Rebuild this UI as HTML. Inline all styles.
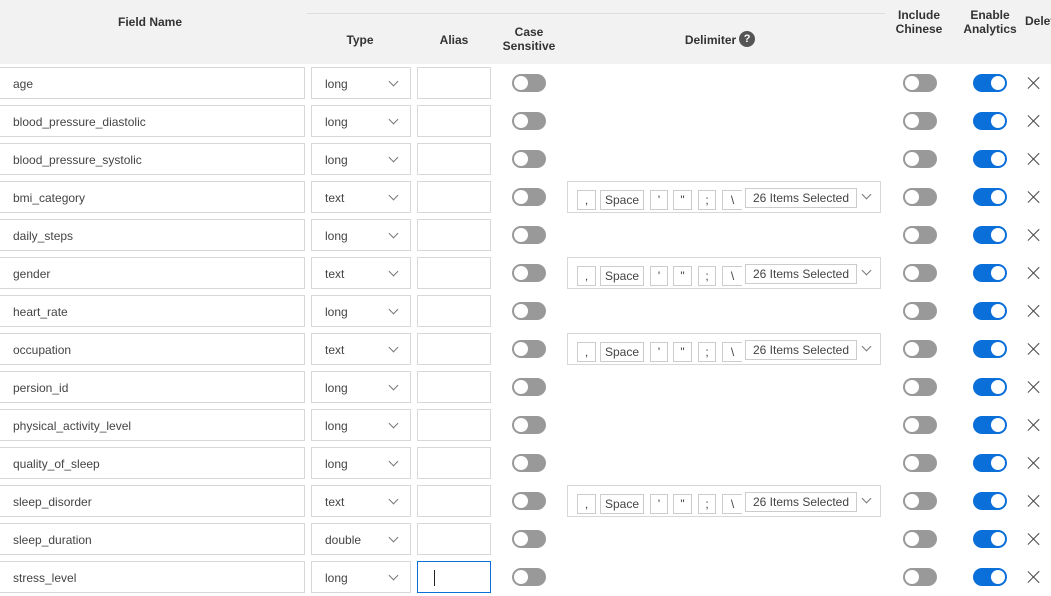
<!DOCTYPE html>
<html><head><meta charset="utf-8">
<style>
*{box-sizing:border-box;margin:0;padding:0}
body{width:1051px;height:596px;overflow:hidden;background:#fff;font-family:"Segoe UI","Liberation Sans",sans-serif;font-size:12px;color:#333;position:relative}
.hd{position:absolute;left:0;top:0;width:1051px;height:64px;background:#f2f2f2}
.hl{position:absolute;left:307px;top:13px;width:578px;height:1px;background:#ddd}
.h{position:absolute;font-weight:bold;font-size:12px;color:#333;text-align:center;line-height:14px}
.q{display:inline-block;width:16px;height:16px;border-radius:50%;background:#555;color:#fff;font-size:11px;line-height:16px;text-align:center;vertical-align:middle;margin-left:3px;margin-top:-3px}
.r{position:absolute;left:0;width:1051px;height:32px}
.in{position:absolute;top:0;height:32px;border:1px solid #d8d8d8;background:#fff;line-height:32px;color:#444;padding-left:13px}
.f{left:-1px;width:306px}
.t{left:311px;width:100px}
.t::after{content:"";position:absolute;right:13px;top:10px;width:6px;height:6px;border-right:1px solid #777;border-bottom:1px solid #777;transform:rotate(45deg)}
.a{left:417px;width:74px}
.tg{position:absolute;top:7px;width:34px;height:18px;border-radius:9px;background:#999}
.tg::after{content:"";position:absolute;left:2px;top:2px;width:14px;height:14px;border-radius:50%;background:#fff}
.on{background:#0a6fd8}.on::after{left:18px}
.x{position:absolute;left:1027px;top:9px;width:14px;height:14px}
.x::before,.x::after{content:"";position:absolute;left:6px;top:-1px;width:1.3px;height:16px;background:#444;transform:rotate(45deg)}
.x::after{transform:rotate(-45deg)}
.d{position:absolute;left:567px;top:0;width:314px;height:32px;border:1px solid #d8d8d8;background:#fff;overflow:hidden}
.d span{position:absolute;top:8px;height:20px;border:1px solid #ccc;line-height:18px;text-align:center;color:#444;font-size:12px}
.d::after{content:"";position:absolute;right:10px;top:9px;width:6px;height:6px;border-right:1px solid #777;border-bottom:1px solid #777;transform:rotate(45deg)}
</style></head><body>
<div class="hd"></div><div class="hl"></div>
<div class="h" style="left:100px;top:15px;width:100px">Field Name</div>
<div class="h" style="left:330px;top:33px;width:60px">Type</div>
<div class="h" style="left:425px;top:33px;width:58px">Alias</div>
<div class="h" style="left:494px;top:25px;width:70px">Case<br>Sensitive</div>
<div class="h" style="left:660px;top:33px;width:120px">Delimiter<span class="q">?</span></div>
<div class="h" style="left:884px;top:8px;width:70px">Include<br>Chinese</div>
<div class="h" style="left:955px;top:8px;width:70px">Enable<br>Analytics</div>
<div class="h" style="left:1025px;top:14px;width:40px;text-align:left">Delete</div>

<div class="r" style="top:67px"><div class="in f">age</div><div class="in t">long</div><div class="in a"></div><div class="tg" style="left:512px"></div><div class="tg" style="left:903px"></div><div class="tg on" style="left:973px"></div><div class="x"></div></div>
<div class="r" style="top:105px"><div class="in f">blood_pressure_diastolic</div><div class="in t">long</div><div class="in a"></div><div class="tg" style="left:512px"></div><div class="tg" style="left:903px"></div><div class="tg on" style="left:973px"></div><div class="x"></div></div>
<div class="r" style="top:143px"><div class="in f">blood_pressure_systolic</div><div class="in t">long</div><div class="in a"></div><div class="tg" style="left:512px"></div><div class="tg" style="left:903px"></div><div class="tg on" style="left:973px"></div><div class="x"></div></div>
<div class="r" style="top:181px"><div class="in f">bmi_category</div><div class="in t">text</div><div class="in a"></div><div class="tg" style="left:512px"></div><div class="d"><span style="left:9px;width:19px">,</span><span style="left:32px;width:44px">Space</span><span style="left:82px;width:18px">'</span><span style="left:105px;width:19px">"</span><span style="left:130px;width:18px">;</span><span style="left:154px;width:20px;border-right:none">\</span><span style="left:177px;width:112px;top:6px">26 Items Selected</span></div><div class="tg" style="left:903px"></div><div class="tg on" style="left:973px"></div><div class="x"></div></div>
<div class="r" style="top:219px"><div class="in f">daily_steps</div><div class="in t">long</div><div class="in a"></div><div class="tg" style="left:512px"></div><div class="tg" style="left:903px"></div><div class="tg on" style="left:973px"></div><div class="x"></div></div>
<div class="r" style="top:257px"><div class="in f">gender</div><div class="in t">text</div><div class="in a"></div><div class="tg" style="left:512px"></div><div class="d"><span style="left:9px;width:19px">,</span><span style="left:32px;width:44px">Space</span><span style="left:82px;width:18px">'</span><span style="left:105px;width:19px">"</span><span style="left:130px;width:18px">;</span><span style="left:154px;width:20px;border-right:none">\</span><span style="left:177px;width:112px;top:6px">26 Items Selected</span></div><div class="tg" style="left:903px"></div><div class="tg on" style="left:973px"></div><div class="x"></div></div>
<div class="r" style="top:295px"><div class="in f">heart_rate</div><div class="in t">long</div><div class="in a"></div><div class="tg" style="left:512px"></div><div class="tg" style="left:903px"></div><div class="tg on" style="left:973px"></div><div class="x"></div></div>
<div class="r" style="top:333px"><div class="in f">occupation</div><div class="in t">text</div><div class="in a"></div><div class="tg" style="left:512px"></div><div class="d"><span style="left:9px;width:19px">,</span><span style="left:32px;width:44px">Space</span><span style="left:82px;width:18px">'</span><span style="left:105px;width:19px">"</span><span style="left:130px;width:18px">;</span><span style="left:154px;width:20px;border-right:none">\</span><span style="left:177px;width:112px;top:6px">26 Items Selected</span></div><div class="tg" style="left:903px"></div><div class="tg on" style="left:973px"></div><div class="x"></div></div>
<div class="r" style="top:371px"><div class="in f">persion_id</div><div class="in t">long</div><div class="in a"></div><div class="tg" style="left:512px"></div><div class="tg" style="left:903px"></div><div class="tg on" style="left:973px"></div><div class="x"></div></div>
<div class="r" style="top:409px"><div class="in f">physical_activity_level</div><div class="in t">long</div><div class="in a"></div><div class="tg" style="left:512px"></div><div class="tg" style="left:903px"></div><div class="tg on" style="left:973px"></div><div class="x"></div></div>
<div class="r" style="top:447px"><div class="in f">quality_of_sleep</div><div class="in t">long</div><div class="in a"></div><div class="tg" style="left:512px"></div><div class="tg" style="left:903px"></div><div class="tg on" style="left:973px"></div><div class="x"></div></div>
<div class="r" style="top:485px"><div class="in f">sleep_disorder</div><div class="in t">text</div><div class="in a"></div><div class="tg" style="left:512px"></div><div class="d"><span style="left:9px;width:19px">,</span><span style="left:32px;width:44px">Space</span><span style="left:82px;width:18px">'</span><span style="left:105px;width:19px">"</span><span style="left:130px;width:18px">;</span><span style="left:154px;width:20px;border-right:none">\</span><span style="left:177px;width:112px;top:6px">26 Items Selected</span></div><div class="tg" style="left:903px"></div><div class="tg on" style="left:973px"></div><div class="x"></div></div>
<div class="r" style="top:523px"><div class="in f">sleep_duration</div><div class="in t">double</div><div class="in a"></div><div class="tg" style="left:512px"></div><div class="tg" style="left:903px"></div><div class="tg on" style="left:973px"></div><div class="x"></div></div>
<div class="r" style="top:561px"><div class="in f">stress_level</div><div class="in t">long</div><div class="in a" style="border-color:#0a6fd8"><div style="position:absolute;left:16px;top:8px;width:1px;height:16px;background:#222"></div></div><div class="tg" style="left:512px"></div><div class="tg" style="left:903px"></div><div class="tg on" style="left:973px"></div><div class="x"></div></div>
</body></html>
